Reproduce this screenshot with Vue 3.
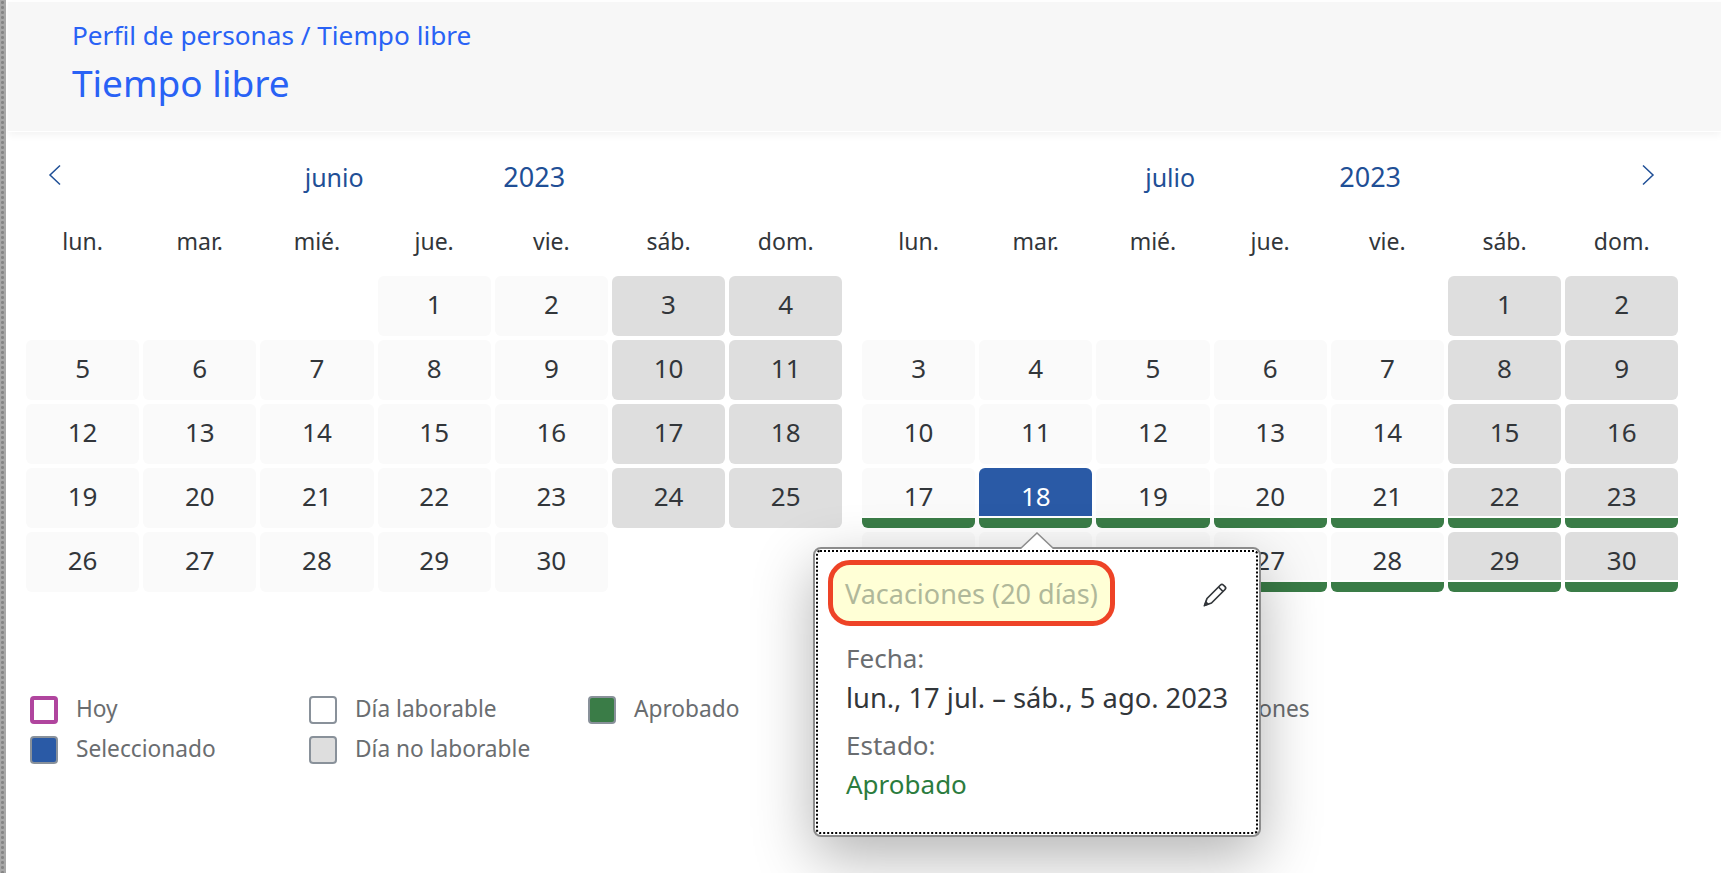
<script setup>
const weekdays = ['lun.', 'mar.', 'mié.', 'jue.', 'vie.', 'sáb.', 'dom.']

function buildMonth(offset, total, approvedFrom) {
  const cells = []
  for (let i = 0; i < offset; i++) cells.push({ key: 'b' + i, blank: true })
  for (let d = 1; d <= total; d++) {
    const col = (offset + d - 1) % 7
    cells.push({
      key: 'd' + d,
      day: d,
      weekend: col >= 5,
      approved: approvedFrom && d >= approvedFrom,
      selected: approvedFrom && d === 18
    })
  }
  return cells
}

const months = [
  { name: 'junio', year: '2023', cells: buildMonth(3, 30, 0), nav: 'prev' },
  { name: 'julio', year: '2023', cells: buildMonth(5, 30, 17), nav: 'next' }
]

const legend = [
  { label: 'Hoy', kind: 'today', col: 1, row: 1 },
  { label: 'Seleccionado', kind: 'selected', col: 1, row: 2 },
  { label: 'Día laborable', kind: 'work', col: 2, row: 1 },
  { label: 'Día no laborable', kind: 'off', col: 2, row: 2 },
  { label: 'Aprobado', kind: 'approved', col: 3, row: 1 },
  { label: 'Vacaciones', kind: 'vacation', col: 5, row: 1 }
]
</script>

<template>
  <div class="page">
    <div class="strip"></div>
    <main class="main">
      <header class="head">
        <div class="crumb">Perfil de personas / Tiempo libre</div>
        <h1 class="title">Tiempo libre</h1>
      </header>

      <section class="months">
        <div v-for="m in months" :key="m.name" class="month">
          <div class="month-title">
            <span class="mt-btn">{{ m.name }}</span>
            <span class="mt-btn mt-year">{{ m.year }}</span>
            <svg v-if="m.nav === 'prev'" class="nav nav-prev" viewBox="0 0 14 22" width="14" height="22">
              <path d="M12 1.5 2 11l10 9.5" fill="none" stroke="#1f4f96" stroke-width="1.5" />
            </svg>
            <svg v-else class="nav nav-next" viewBox="0 0 14 22" width="14" height="22">
              <path d="M2 1.5 12 11 2 20.5" fill="none" stroke="#1f4f96" stroke-width="1.5" />
            </svg>
          </div>
          <div class="weekdays">
            <span v-for="w in weekdays" :key="w">{{ w }}</span>
          </div>
          <div class="grid">
            <template v-for="c in m.cells" :key="c.key">
              <div v-if="c.blank"></div>
              <div v-else class="cell" :class="{ 'is-approved': c.approved }">
                <div class="cell-face" :class="{ weekend: c.weekend, selected: c.selected }">{{ c.day }}</div>
                <div v-if="c.approved" class="cell-bar"></div>
              </div>
            </template>
          </div>
        </div>
      </section>

      <section class="legend">
        <div
          v-for="l in legend"
          :key="l.label"
          class="legend-item"
          :style="{ gridColumn: l.col, gridRow: l.row }"
        >
          <span class="swatch" :class="l.kind"></span>
          <span class="legend-text">{{ l.label }}</span>
        </div>
      </section>
    </main>

    <aside class="popover">
      <svg class="arrow" viewBox="0 0 36 17" width="36" height="17">
        <path d="M1 17 18 1l17 16" fill="#fff" stroke="#8c8c8c" stroke-width="1.5" />
      </svg>
      <div class="pop-inner">
        <div class="pop-head">
          <span class="pop-title">Vacaciones (20 días)</span>
          <svg class="pencil" viewBox="0 0 26 26" width="26" height="26">
            <path d="M2.5 23.5 5 16.5 18.5 3a2 2 0 0 1 2.8 0l1.7 1.7a2 2 0 0 1 0 2.8L9.5 21Z" fill="none" stroke="#32363a" stroke-width="1.7" stroke-linejoin="round" />
            <path d="M16.5 5l4.5 4.5" fill="none" stroke="#32363a" stroke-width="1.7" />
            <path d="M1.5 24.5 3.6 18.6l3.8 3.8Z" fill="#32363a" />
          </svg>
        </div>
        <div class="pop-label first">Fecha:</div>
        <div class="pop-value">lun., 17 jul. – sáb., 5 ago. 2023</div>
        <div class="pop-label">Estado:</div>
        <div class="pop-status">Aprobado</div>
      </div>
    </aside>
  </div>
</template>

<style>
html, body { margin: 0; background: #fff; }
</style>

<style scoped>
.page {
  position: relative;
  display: flex;
  width: 1721px;
  height: 873px;
  overflow: hidden;
  background: #fff;
  font-family: "Noto Sans", "Open Sans", sans-serif;
  color: #32363a;
}
.strip {
  position: relative;
  z-index: 1;
  flex: 0 0 6px;
  background-color: #a8a8a8;
  background-image: radial-gradient(circle, #858585 1.2px, transparent 1.8px);
  background-size: 5px 5px;
}
.main { flex: 1; min-width: 0; padding-top: 2px; }
.head {
  margin-left: 2px;
  height: 129px;
  box-sizing: border-box;
  padding: 15px 0 0 64px;
  background: #f7f7f7;
  box-shadow: 0 1px 0 #fff, 0 4px 8px rgba(0, 0, 0, 0.05);
  color: #2962f5;
}
.crumb { font-size: 26.2px; line-height: 36px; }
.title { margin: 5px 0 0; font-size: 37px; line-height: 50px; font-weight: 400; }

.months { display: flex; gap: 19.6px; padding: 27px 0 0 20px; }
.month { width: 816.4px; }
.month-title {
  position: relative;
  display: flex;
  justify-content: center;
  height: 40px;
  margin-bottom: 23px;
  color: #1f4f96;
  font-size: 25px;
  line-height: 38px;
}
.mt-btn { width: 200px; text-align: center; }
.mt-year { font-size: 27px; }
.nav { position: absolute; top: 6px; }
.nav-prev { left: 22px; }
.nav-next { right: 23px; }

.weekdays {
  display: grid;
  grid-template-columns: repeat(7, 113.2px);
  column-gap: 4px;
  height: 40px;
  margin-bottom: 15px;
  font-size: 23px;
  line-height: 40px;
  text-align: center;
}
.grid {
  display: grid;
  grid-template-columns: repeat(7, 113.2px);
  grid-auto-rows: 60px;
  gap: 4px;
}
.cell { display: flex; flex-direction: column; gap: 2px; font-size: 26px; }
.cell-face {
  flex: 1;
  min-height: 0;
  border-radius: 6px;
  background: #fafafa;
  line-height: 57px;
  text-align: center;
}
.is-approved .cell-face { border-radius: 6px 6px 0 0; }
.cell-face.weekend { background: #dedede; }
.cell-face.selected { background: #2a5aa6; color: #fff; }
.cell-bar { flex: 0 0 10px; border-radius: 0 0 6px 6px; background: #3a7c47; }

.legend {
  display: grid;
  grid-template-columns: repeat(5, 279px);
  grid-auto-rows: 28px;
  row-gap: 12px;
  margin: 104px 0 0 24px;
  color: #6a6d70;
  font-size: 22.7px;
}
.legend-item { display: flex; align-items: center; gap: 18px; white-space: nowrap; }
.legend-text { padding-bottom: 3px; }
.swatch {
  flex: 0 0 28px;
  height: 28px;
  box-sizing: border-box;
  border: 2px solid #89919a;
  border-radius: 4px;
}
.swatch.today { border: 4px solid #b0459e; }
.swatch.selected { background: #2a5aa6; }
.swatch.work { background: #fff; }
.swatch.off { background: #dedede; }
.swatch.approved { background: #3a7c47; }
.swatch.vacation { background: #fff; }

.popover {
  position: absolute;
  left: 813px;
  top: 547px;
  width: 448px;
  height: 290px;
  box-sizing: border-box;
  padding: 1px;
  border: 2px solid #8c8c8c;
  border-radius: 8px;
  background: #fff;
  box-shadow: 0 20px 60px rgba(0, 0, 0, 0.3);
}
.arrow { position: absolute; left: 204px; top: -17px; }
.pop-inner {
  height: 100%;
  box-sizing: border-box;
  padding: 8px 12px 0 10px;
  border: 2px dotted #000;
  border-radius: 4px;
}
.pop-head { display: flex; align-items: center; justify-content: space-between; }
.pop-title {
  box-sizing: border-box;
  height: 66px;
  padding: 0 12px;
  border: 5px solid #ee4326;
  border-radius: 22px;
  background: #ffffd6;
  color: #b0b89a;
  font-size: 27px;
  line-height: 58px;
  white-space: nowrap;
}
.pencil { margin: 4px 16px 0 0; }
.pop-label, .pop-value, .pop-status { padding-left: 18px; line-height: 39px; font-size: 26px; white-space: nowrap; }
.pop-value { font-size: 27.3px; }
.pop-label { color: #6a6d70; margin-top: 9px; }
.pop-label.first { margin-top: 13px; }
.pop-status { color: #2b7c3e; }
</style>
